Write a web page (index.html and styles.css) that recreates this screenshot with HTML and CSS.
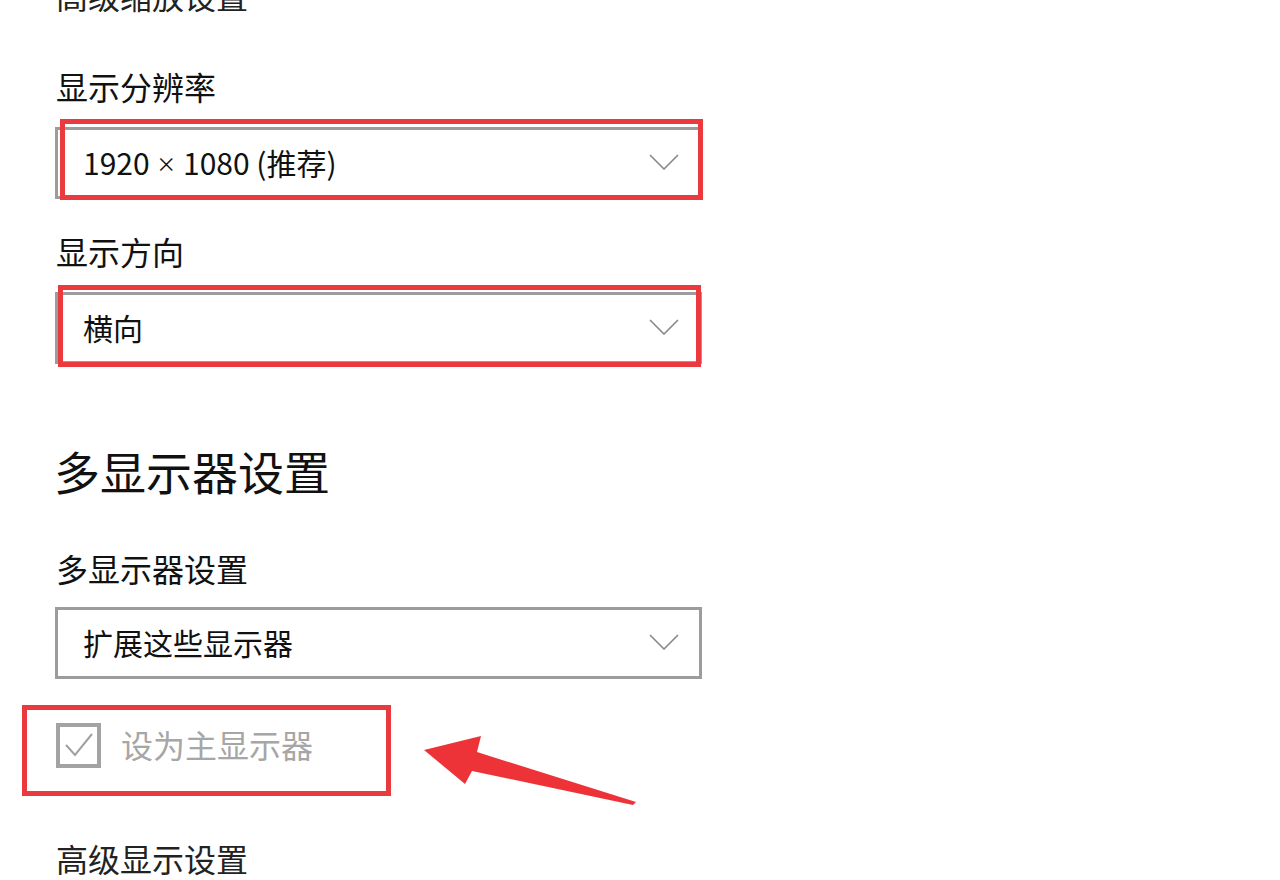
FILE: index.html
```html
<!DOCTYPE html>
<html lang="zh-CN">
<head>
<meta charset="utf-8">
<title>显示设置</title>
<link rel="stylesheet" href="styles.css">
</head>
<body>
<div class="page">
  <div class="label label-top">高级缩放设置</div>

  <div class="label label-res">显示分辨率</div>
  <div class="dropdown">
    <span class="value">1920 <span class="times">×</span> 1080 (推荐)</span>
    <svg class="chev" width="30" height="16" viewBox="0 0 30 16"><path d="M1 1 L15 15 L29 1" fill="none" stroke="#888" stroke-width="1.6"/></svg>
  </div>

  <div class="label label-orient">显示方向</div>
  <div class="dropdown">
    <span class="value">横向</span>
    <svg class="chev" width="30" height="16" viewBox="0 0 30 16"><path d="M1 1 L15 15 L29 1" fill="none" stroke="#888" stroke-width="1.6"/></svg>
  </div>

  <h2 class="heading">多显示器设置</h2>

  <div class="label label-multi">多显示器设置</div>
  <div class="dropdown dropdown-full">
    <span class="value">扩展这些显示器</span>
    <svg class="chev" width="30" height="16" viewBox="0 0 30 16"><path d="M1 1 L15 15 L29 1" fill="none" stroke="#888" stroke-width="1.6"/></svg>
  </div>

  <div class="check-row">
    <span class="checkbox">
      <svg width="36" height="36" viewBox="0 0 36 36"><path d="M5 18 L14 28 L31 7" fill="none" stroke="#a0a0a0" stroke-width="2"/></svg>
    </span>
    <span class="check-text">设为主显示器</span>
  </div>

  <div class="label label-adv">高级显示设置</div>

  <div class="mark mark-1"></div>
  <div class="mark mark-2"></div>
  <div class="mark mark-3"></div>
  <svg class="arrow" width="1280" height="880" viewBox="0 0 1280 880">
    <polygon points="424,750 481,736 477,752 636,802 633,805 472,771 465,784" fill="#ee3338"/>
  </svg>
</div>
</body>
</html>
```

FILE: styles.css
```css
html, body {
  margin: 0;
  padding: 0;
  background: #ffffff;
}

body {
  font-family: "Noto Sans CJK SC", "Noto Sans", sans-serif;
  color: #000;
  overflow: hidden;
  height: 880px;
}

.page {
  position: relative;
  display: flow-root;
  padding-left: 56px;
  width: 1224px;
  height: 880px;
}

.label {
  font-size: 32px;
  line-height: 32px;
  height: 32px;
  color: #111;
  white-space: nowrap;
}

.label-top {
  margin-top: -21px;
  color: #222;
}

.label-res {
  margin-top: 59px;
}

.dropdown {
  margin-top: 25px;
  height: 66px;
  border: 3px solid #9c9c9c;
  margin-left: -1px;
  display: flex;
  align-items: center;
  justify-content: space-between;
  padding: 0 20px 0 25px;
  box-sizing: content-box;
  width: 596px;
}

.value {
  font-size: 30px;
  color: #111;
  line-height: 1;
  padding-bottom: 2px;
}

.times {
  font-size: 20px;
  vertical-align: 3px;
}

.chev {
  display: block;
  margin-top: -2px;
}

.label-orient {
  margin-top: 36px;
}

.heading {
  margin: 83px 0 0 -2px;
  font-size: 46px;
  line-height: 46px;
  height: 46px;
  font-weight: normal;
  color: #111;
}

.label-multi {
  margin-top: 59px;
}

.dropdown-full {
  margin-top: 23px;
}

.check-row {
  margin-top: 44px;
  display: flex;
  align-items: center;
  gap: 20px;
  height: 44px;
}

.checkbox {
  width: 37px;
  height: 37px;
  border: 4px solid #a3a3a3;
  display: flex;
  align-items: center;
  justify-content: center;
}

.check-text {
  font-size: 32px;
  color: #a6a6a6;
  line-height: 1;
  padding-bottom: 2px;
}

.label-adv {
  margin-top: 75px;
  color: #222;
}

.mark {
  position: absolute;
  border: 5px solid #ea3a3f;
  box-sizing: border-box;
}

.mark-1 {
  left: 60px;
  top: 119px;
  width: 643px;
  height: 81px;
}

.mark-2 {
  left: 58px;
  top: 285px;
  width: 643px;
  height: 82px;
}

.mark-3 {
  left: 22px;
  top: 705px;
  width: 369px;
  height: 91px;
}

.arrow {
  position: absolute;
  left: 0;
  top: 0;
  pointer-events: none;
}
```
